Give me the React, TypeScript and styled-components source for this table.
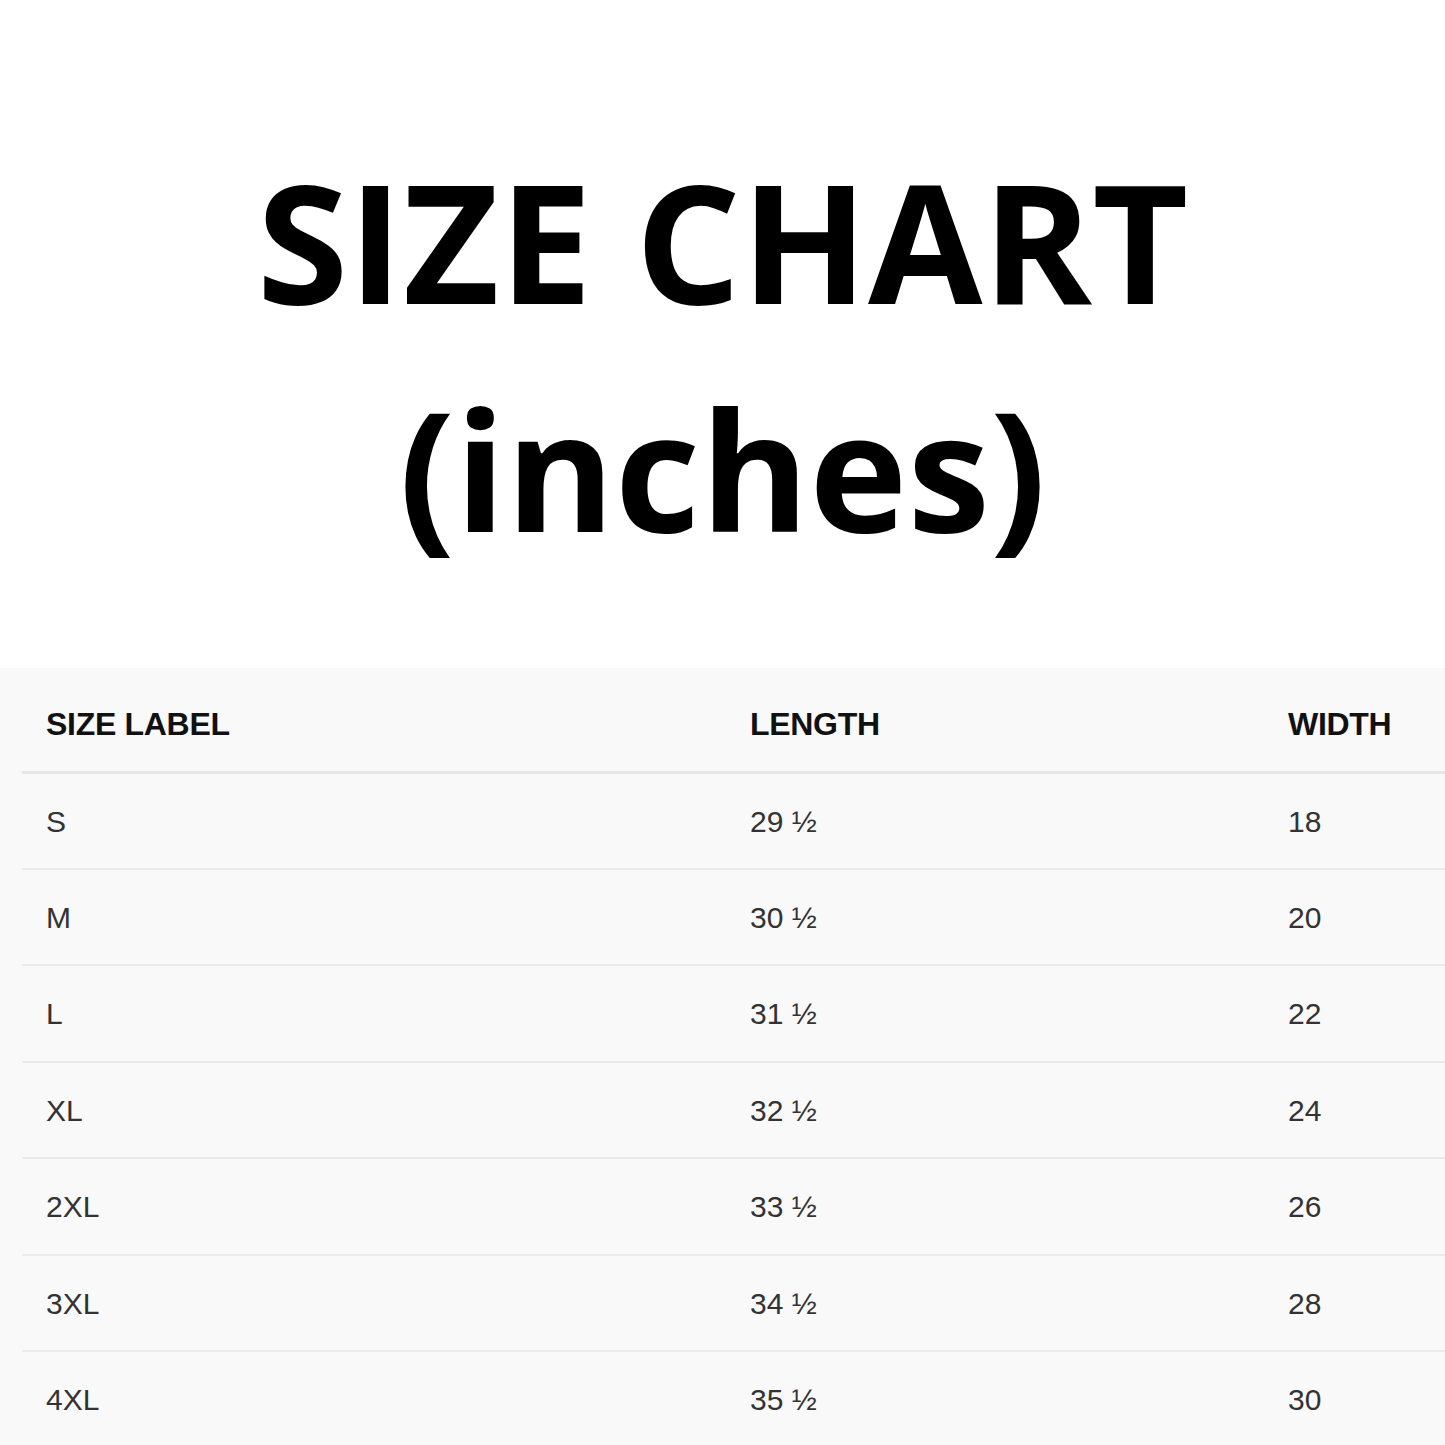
import React from 'react';
import styled, { createGlobalStyle } from 'styled-components';

const GlobalStyle = createGlobalStyle`
  html, body {
    margin: 0;
    padding: 0;
    background: #fff;
  }
`;

const Page = styled.div`
  width: 1445px;
  height: 1445px;
  overflow: hidden;
  display: flex;
  flex-direction: column;
`;

const Hero = styled.header`
  flex-shrink: 0;
  height: 668px;
  box-sizing: border-box;
  padding-top: 126px;
`;

const Title = styled.h1`
  margin: 0;
  font-family: 'Open Sans', sans-serif;
  font-weight: 700;
  font-size: 166px;
  line-height: 228px;
  color: #000;
  text-align: center;
  letter-spacing: 0;
`;

const Panel = styled.section`
  flex: 1;
  background: #f9f9f9;
  display: flex;
  justify-content: flex-end;
  align-items: flex-start;
`;

const Table = styled.table`
  width: 1423px;
  table-layout: fixed;
  border-collapse: collapse;
  font-family: 'Liberation Sans', Arial, sans-serif;
`;

const HeadCell = styled.th<{ $w: number }>`
  width: ${({ $w }) => $w}px;
  height: 104px;
  box-sizing: border-box;
  padding: 10px 0 0 24px;
  text-align: left;
  font-size: 32px;
  font-weight: 700;
  color: #111;
  border-bottom: 3px solid #e6e6e6;
  letter-spacing: -0.3px;
`;

const Row = styled.tr`
  height: 96.5px;
  border-bottom: 2px solid #ebebeb;
`;

const Cell = styled.td`
  padding: 2px 0 0 24px;
  font-size: 30px;
  color: #333;
  vertical-align: middle;
`;

const rows = [
  ['S', '29 ½', '18'],
  ['M', '30 ½', '20'],
  ['L', '31 ½', '22'],
  ['XL', '32 ½', '24'],
  ['2XL', '33 ½', '26'],
  ['3XL', '34 ½', '28'],
  ['4XL', '35 ½', '30'],
];

export default function App() {
  return (
    <Page>
      <GlobalStyle />
      <Hero>
        <Title>
          SIZE CHART
          <br />
          (inches)
        </Title>
      </Hero>
      <Panel>
        <Table>
          <thead>
            <tr>
              <HeadCell $w={704}>SIZE LABEL</HeadCell>
              <HeadCell $w={538}>LENGTH</HeadCell>
              <HeadCell $w={181}>WIDTH</HeadCell>
            </tr>
          </thead>
          <tbody>
            {rows.map((r) => (
              <Row key={r[0]}>
                {r.map((c, i) => (
                  <Cell key={i}>{c}</Cell>
                ))}
              </Row>
            ))}
          </tbody>
        </Table>
      </Panel>
    </Page>
  );
}
